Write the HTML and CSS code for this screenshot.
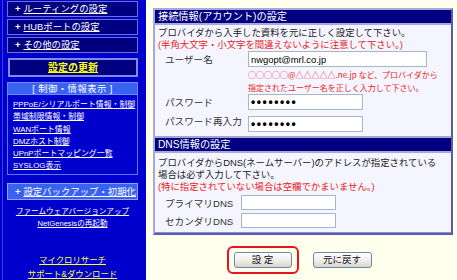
FILE: index.html
```html
<!DOCTYPE html>
<html lang="ja">
<head>
<meta charset="utf-8">
<title>接続情報(アカウント)の設定</title>
<link rel="stylesheet" href="styles.css">
</head>
<body>
<div class="page">
  <nav class="side">
    <div class="menu-box"><span class="plus">+</span><a href="#">ルーティングの設定</a></div>
    <div class="menu-box"><span class="plus">+</span><a href="#">HUBポートの設定</a></div>
    <div class="menu-box"><span class="plus">+</span><a href="#">その他の設定</a></div>
    <div class="update-box"><a href="#">設定の更新</a></div>
    <div class="group">
      <div class="group-head">[ 制御・情報表示 ]</div>
      <ul class="group-list">
        <li><a href="#">PPPoE/シリアルポート情報・制御</a></li>
        <li><a href="#">帯域制限情報・制御</a></li>
        <li><a href="#">WANポート情報</a></li>
        <li><a href="#">DMZホスト制御</a></li>
        <li><a href="#">UPnPポートマッピング一覧</a></li>
        <li><a href="#">SYSLOG表示</a></li>
      </ul>
    </div>
    <div class="menu-box light"><span class="plus">+</span><a href="#">設定バックアップ・初期化</a></div>
    <div class="center-links">
      <a href="#">ファームウェアバージョンアップ</a>
      <a href="#">NetGenesisの再起動</a>
    </div>
    <div class="yellow-links">
      <a href="#">マイクロリサーチ</a>
      <a href="#">サポート&amp;ダウンロード</a>
    </div>
  </nav>
  <main class="main">
    <section class="panel">
      <h2 class="sec-head">接続情報(アカウント)の設定</h2>
      <div class="sec-body">
        <p class="note">プロバイダから入手した資料を元に正しく設定して下さい。</p>
        <p class="note warn">(半角大文字・小文字を間違えないように注意して下さい。)</p>
        <div class="form acct">
          <label class="lbl" for="user">ユーザー名</label>
          <input class="field wide" id="user" type="text" value="nwgopt@mrl.co.jp">
          <p class="hint warn">○○○○○@△△△△△.ne.jp など、プロバイダから<br>指定されたユーザー名を正しく入力して下さい。</p>
          <label class="lbl" for="pw1">パスワード</label>
          <input class="field pw" id="pw1" type="password" value="12345678">
          <label class="lbl" for="pw2">パスワード再入力</label>
          <input class="field pw" id="pw2" type="password" value="12345678">
        </div>
      </div>
      <h2 class="sec-head sec2">DNS情報の設定</h2>
      <div class="sec-body body2">
        <p class="note">プロバイダからDNS(ネームサーバー)のアドレスが指定されている<br>場合は必ず入力して下さい。</p>
        <p class="note warn">(特に指定されていない場合は空欄でかまいません。)</p>
        <div class="form dns">
          <label class="lbl" for="dns1">プライマリDNS</label>
          <input class="field dnsf" id="dns1" type="text" value="">
          <label class="lbl" for="dns2">セカンダリDNS</label>
          <input class="field dnsf" id="dns2" type="text" value="">
        </div>
      </div>
    </section>
    <div class="actions">
      <span class="mark"><button class="btn set" type="button">設 定</button></span>
      <button class="btn" type="button">元に戻す</button>
    </div>
  </main>
</div>
</body>
</html>
```
FILE: styles.css
```css
* { box-sizing: border-box; }
html, body { margin: 0; padding: 0; }
body {
  width: 457px;
  height: 280px;
  overflow: hidden;
  background: #ffffee;
  font-family: "Liberation Sans", "Noto Sans CJK JP", sans-serif;
  color: #222;
}
.page { display: flex; height: 280px; }

/* ---------- sidebar ---------- */
.side {
  width: 146px;
  flex: none;
  background: linear-gradient(to right, #0000cc 2px, #3a3aee 2px, #3a3aee 3px, #0000cc 3px);
  padding: 1px 8px 0 7px;
  color: #fff;
}
.side a { color: #fff; text-decoration: underline; }
.menu-box {
  height: 16px;
  margin-bottom: 2px;
  background: #000080;
  border: 1px solid #6f6fd8;
  font-size: 9.4px;
  line-height: 14px;
  padding-left: 7px;
  white-space: nowrap;
  display: flex;
  gap: 3px;
}
.plus { font-weight: bold; }
.update-box {
  margin-top: 5px;
  height: 19px;
  background: #000080;
  border: 2px solid #7b8cf0;
  margin-left: 1px;
  text-align: center;
  font-size: 10px;
  line-height: 15px;
  font-weight: bold;
}
.update-box a { color: #ffff00; }
.group { margin-top: 5px; }
.group-head {
  height: 13px;
  background: #3a62f2;
  border: 1px solid #6f8cff;
  text-align: center;
  font-size: 9.4px;
  line-height: 11px;
  letter-spacing: 0.4px;
}
.group-list {
  list-style: none;
  margin: 0;
  padding: 4px 0 1px 5px;
  border: 1px solid #5a78ff;
  border-top: none;
  font-size: 7.9px;
  line-height: 12.3px;
  white-space: nowrap;
}
.menu-box.light {
  margin-top: 8px;
  height: 17px;
  background: #3a62f2;
  border-color: #8fa4ff;
  line-height: 15px;
}
.center-links {
  margin-top: 6px;
  display: flex;
  flex-direction: column;
  align-items: center;
  font-size: 7.6px;
  line-height: 12px;
  white-space: nowrap;
}
.yellow-links {
  margin-top: 23px;
  display: flex;
  flex-direction: column;
  align-items: center;
  font-size: 8.4px;
  line-height: 14.5px;
  white-space: nowrap;
}
.side .yellow-links a { color: #ffff33; }

/* ---------- main ---------- */
.main {
  flex: 1;
  padding: 8px 4px 0 7px;
}
.panel {
  background: #f5f5ff;
  border: 2px solid;
  border-color: #a8a8dc #5a5ab4 #5a5ab4 #a8a8dc;
  box-shadow: inset 0 -1px 0 #8c8cd0;
}
.sec-head {
  margin: 0;
  height: 15px;
  background: #000080;
  color: #fff;
  font-size: 10.2px;
  font-weight: normal;
  line-height: 13px;
  padding-left: 3px;
  border-bottom: 2px solid #a8a8dc;
}
.sec-head.sec2 {
  height: 17px;
  border-top: 2px solid #a4a4d0;
}
.sec-body { padding: 2px 3px 4px; }
.body2 { padding: 4px 3px 5px; }
.note {
  margin: 0;
  font-size: 9.4px;
  line-height: 12px;
  white-space: nowrap;
}
.warn { color: #ee2222; }
.form {
  display: grid;
  align-items: center;
  padding-left: 7px;
}
.acct { grid-template-columns: 83px auto; }
.dns { grid-template-columns: 76px auto; row-gap: 3px; margin-top: 2px; }
.lbl {
  font-size: 9.6px;
  color: #333;
  white-space: nowrap;
}
.field {
  height: 16px;
  border: 1px solid #a3b8cd;
  background: #fff;
  font-family: "Liberation Sans", "Noto Sans CJK JP", sans-serif;
  font-size: 9.4px;
  padding: 0 2px;
  color: #000;
  outline: none;
}
.wide { width: 179px; }
.pw {
  width: 115px;
  font-size: 12px;
  letter-spacing: 1.6px;
  font-weight: bold;
}
.hint {
  grid-column: 2;
  margin: 1px 0 0;
  font-family: "Noto Sans CJK JP", sans-serif;
  font-size: 8px;
  line-height: 13px;
  white-space: nowrap;
}
#pw2 { margin-top: 6px; }
.dnsf { width: 95px; height: 15px; }

.actions {
  display: flex;
  justify-content: center;
  align-items: center;
  gap: 14px;
  margin-top: 11px;
  padding-right: 8px;
}
.mark {
  display: inline-flex;
  padding: 4px 5px;
  border: 2px solid #e8141c;
  border-radius: 6px;
}
.btn {
  height: 16px;
  width: 59px;
  padding: 0;
  border: 1px solid #6f86a6;
  border-radius: 3px;
  background: linear-gradient(#ffffff, #ecebe6 60%, #d8d6cc);
  font-family: "Liberation Sans", "Noto Sans CJK JP", sans-serif;
  font-size: 9.5px;
  line-height: 14px;
  color: #111;
}
.btn.set { width: 58px; }
```
